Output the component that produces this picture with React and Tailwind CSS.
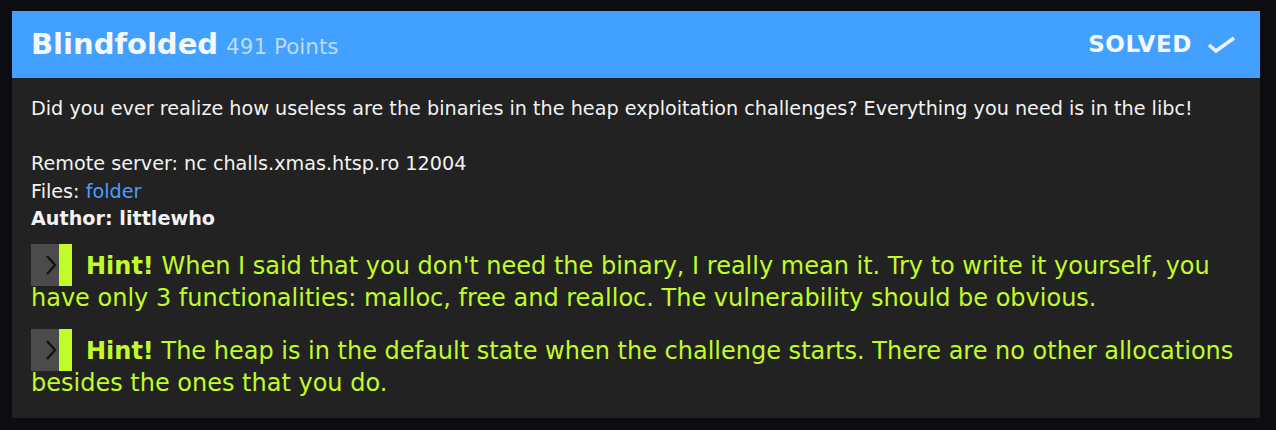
import React from 'react';

const hints = [
  "When I said that you don't need the binary, I really mean it. Try to write it yourself, you have only 3 functionalities: malloc, free and realloc. The vulnerability should be obvious.",
  'The heap is in the default state when the challenge starts. There are no other allocations besides the ones that you do.',
];

const HintIcon = () => (
  <span className="inline-flex align-top h-[42px] w-[41px] -mt-[6px] -mb-[4px] mr-[14px]">
    <span className="flex items-center justify-center w-[28px] bg-[#4b4b4b]">
      <svg width="12" height="22" viewBox="0 0 12 22" className="ml-[12px]">
        <path d="M2 2 L10 11 L2 20" fill="none" stroke="#141414" strokeWidth="2.5" />
      </svg>
    </span>
    <span className="w-[13px] bg-[#c1fb29]" />
  </span>
);

const App = () => {
  return (
    <div
      className="w-[1276px] h-[430px] bg-[#0c0c11] pt-[11px] pl-[12px]"
      style={{ fontFamily: '"DejaVu Sans", sans-serif' }}
    >
      <div className="w-[1248px] h-[407px] bg-[#222222]">
        <div className="h-[67px] bg-[#42a1ff] flex items-center justify-between pl-[19px] pr-[23px]">
          <div className="flex items-baseline">
            <span className="text-[29px] font-bold text-[#f5f8ff] mr-[8px]">Blindfolded</span>
            <span className="text-[21.5px] text-[#b9dcff]">491 Points</span>
          </div>
          <div className="flex items-center">
            <span className="text-[23px] font-bold text-[#f5f8ff] tracking-[0.6px] mr-[15px]">SOLVED</span>
            <svg width="30" height="20" viewBox="0 0 30 20">
              <path d="M2 10 L9 16 L27 3" fill="none" stroke="#eef5ff" strokeWidth="3.5" />
            </svg>
          </div>
        </div>
        <div className="px-[19px] pt-[17px] text-[19.2px] leading-[27.5px] text-[#f2f2f2]">
          <p>Did you ever realize how useless are the binaries in the heap exploitation challenges? Everything you need is in the libc!</p>
          <p className="mt-[27.5px]">Remote server: nc challs.xmas.htsp.ro 12004</p>
          <p>
            Files: <span className="text-[#4a9eff]">folder</span>
          </p>
          <p className="font-bold">Author: littlewho</p>
          <div className="mt-[17px] text-[24px] leading-[32px] text-[#c1fb29]">
            {hints.map((h, i) => (
              <p key={i} className={i > 0 ? 'mt-[21px]' : ''}>
                <HintIcon />
                <span className="font-bold">Hint!</span> {h}
              </p>
            ))}
          </div>
        </div>
      </div>
    </div>
  );
};

export default App;
